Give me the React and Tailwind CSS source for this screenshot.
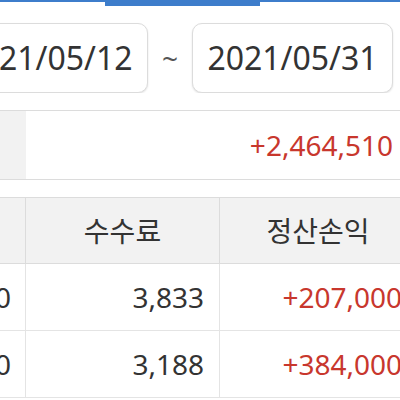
// App.jsx — 기간별 정산 요약 (trimmed view)
const rows = [
  { amount: "2,430,000", fee: "3,833", profit: "+207,000" },
  { amount: "1,850,000", fee: "3,188", profit: "+384,000" },
];

function DateBox({ value }) {
  return (
    <div className="w-[201px] h-[70px] shrink-0 flex items-center justify-center rounded-[10px] border border-[#dcdcdc] bg-white shadow-[0_1px_2px_rgba(0,0,0,0.12)] text-[32px] text-[#333]">
      {value}
    </div>
  );
}

function Cell({ w, children, className = "" }) {
  return (
    <div
      className={`${w} shrink-0 h-full flex items-center overflow-hidden whitespace-nowrap ${className}`}
    >
      {children}
    </div>
  );
}

export default function App() {
  return (
    <div
      className="w-[400px] h-[400px] overflow-hidden bg-white text-[#333]"
      style={{ fontFamily: '"Noto Sans", "Noto Sans CJK KR", sans-serif' }}
    >
      {/* tab indicator */}
      <div className="flex h-[6px]">
        <div className="w-[105px] border-t-2 border-[#3d7dcb]" />
        <div className="w-[155px] bg-[#3d7dcb]" />
        <div className="flex-1 border-t-2 border-[#3d7dcb]" />
      </div>

      {/* date range */}
      <div className="flex justify-end items-center pt-[17px] pr-[7px] gap-[14px] overflow-hidden">
        <DateBox value="2021/05/12" />
        <span className="text-[28px] text-[#555] leading-none">~</span>
        <DateBox value="2021/05/31" />
      </div>

      {/* total */}
      <div className="mt-[17px] h-[70px] flex border-y border-[#dcdcdc]">
        <div className="w-[26px] bg-[#f2f2f2]" />
        <div className="flex-1 flex items-center justify-end pr-[7px] text-[28px] text-[#c8372d]">
          +2,464,510
        </div>
      </div>

      {/* table */}
      <div className="mt-[17px] w-[420px] border-t border-[#dcdcdc]">
        <div className="h-[66px] flex bg-[#f2f2f2] border-b border-[#dcdcdc] text-[28px]">
          <Cell w="w-[26px]" className="border-r border-[#dcdcdc]" />
          <Cell w="w-[194px]" className="justify-center border-r border-[#dcdcdc]">
            수수료
          </Cell>
          <Cell w="w-[196px]" className="justify-center">
            정산손익
          </Cell>
        </div>
        {rows.map((r, i) => (
          <div key={i} className="h-[67px] flex border-b border-[#e4e4e4] text-[28px]">
            <Cell w="w-[26px]" className="justify-end pr-[14px] border-r border-[#e4e4e4]">
              {r.amount}
            </Cell>
            <Cell w="w-[194px]" className="justify-end pr-[15px] border-r border-[#e4e4e4]">
              {r.fee}
            </Cell>
            <Cell w="w-[196px]" className="justify-end pr-[14px] text-[#c8372d]">
              {r.profit}
            </Cell>
          </div>
        ))}
      </div>
    </div>
  );
}
